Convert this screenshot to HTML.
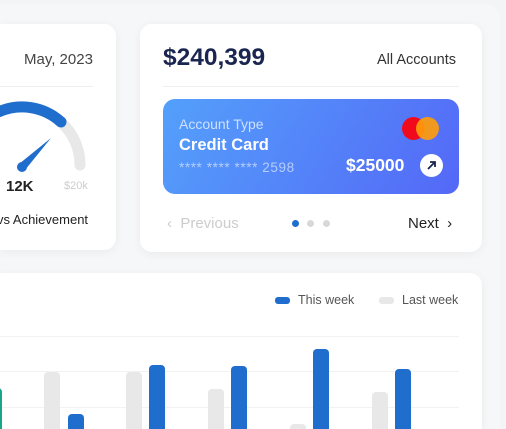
<!DOCTYPE html>
<html><head><style>
*{margin:0;padding:0;box-sizing:border-box}
html,body{width:506px;height:429px;overflow:hidden}
body{background:#f3f4f6;font-family:"Liberation Sans",sans-serif;position:relative}
.outer{position:absolute;left:0;top:4px;width:500px;height:425px;background:#f6f7f8;border-radius:0 14px 0 0}
.card{position:absolute;background:#fff;border-radius:12px;box-shadow:0 2px 10px rgba(0,0,0,.05)}
.t{position:absolute;white-space:nowrap}
</style></head><body>
<div class="outer"></div>
<div class="card" style="left:0;top:24px;width:116px;height:226px;border-radius:0 12px 12px 0"></div>
<div class="t" style="left:24px;top:51px;font-size:15px;color:#444">May, 2023</div>
<div style="position:absolute;left:0;top:86px;width:93px;height:1px;background:#eee"></div>
<svg style="position:absolute;left:0;top:0" width="120" height="250">
<path d="M-36 165 A58 58 0 0 1 80 165" fill="none" stroke="#e8e8e8" stroke-width="11" stroke-linecap="round"/>
<path d="M-36 165 A58 58 0 0 1 61 122" fill="none" stroke="#1f6dcc" stroke-width="11" stroke-linecap="round"/>
<path d="M19 164 L51 138 L25 170 Z" fill="#1f6dcc"/>
<circle cx="22" cy="167" r="5" fill="#1f6dcc"/>
</svg>
<div class="t" style="left:6px;top:178px;font-size:15px;font-weight:bold;color:#222">12K</div>
<div class="t" style="left:64px;top:180px;font-size:11px;color:#ccc">$20k</div>
<div class="t" style="left:-3px;top:212px;font-size:13px;color:#222">vs Achievement</div>

<div class="card" style="left:140px;top:24px;width:342px;height:228px"></div>
<div class="t" style="left:163px;top:44px;font-size:24.5px;font-weight:bold;color:#1a2550">$240,399</div>
<div class="t" style="left:377px;top:52px;font-size:14.5px;color:#333">All Accounts</div>
<div style="position:absolute;left:163px;top:86px;width:296px;height:1px;background:#f0f0f0"></div>
<div style="position:absolute;left:163px;top:99px;width:296px;height:95px;border-radius:12px;background:linear-gradient(120deg,#54a0fb,#5468f7)"></div>
<div class="t" style="left:179px;top:116px;font-size:14px;color:#cde0ff">Account Type</div>
<div class="t" style="left:179px;top:136px;font-size:16.5px;font-weight:bold;color:#fff">Credit Card</div>
<div class="t" style="left:179px;top:160px;font-size:13.5px;color:#b5cdfc;letter-spacing:.6px">**** **** **** 2598</div>
<div class="t" style="left:346px;top:155px;font-size:17.5px;font-weight:bold;color:#fff">$25000</div>
<div style="position:absolute;left:420px;top:154px;width:23px;height:23px;border-radius:50%;background:#fff"></div>
<svg style="position:absolute;left:420px;top:154px" width="23" height="23"><path d="M8 15 L15 8 M10 8 H15 V13" fill="none" stroke="#1a2550" stroke-width="1.8"/></svg>
<div style="position:absolute;left:402px;top:117px;width:23px;height:23px;border-radius:50%;background:#f00a1c"></div>
<div style="position:absolute;left:416px;top:117px;width:23px;height:23px;border-radius:50%;background:#ff9c0b;opacity:.92"></div>
<div class="t" style="left:167px;top:215px;font-size:15px;color:#ccc">‹&nbsp; Previous</div>
<div style="position:absolute;left:292px;top:220px;width:7px;height:7px;border-radius:50%;background:#1f6dcc"></div>
<div style="position:absolute;left:307px;top:220px;width:7px;height:7px;border-radius:50%;background:#d8d8d8"></div>
<div style="position:absolute;left:323px;top:220px;width:7px;height:7px;border-radius:50%;background:#d8d8d8"></div>
<div class="t" style="left:408px;top:215px;font-size:15px;color:#222">Next &nbsp;›</div>

<div class="card" style="left:0;top:273px;width:482px;height:156px;border-radius:0 12px 0 0"></div>
<div style="position:absolute;left:275px;top:297px;width:15px;height:7px;border-radius:3px;background:#1f6dcc"></div>
<div class="t" style="left:298px;top:293px;font-size:12.5px;color:#555">This week</div>
<div style="position:absolute;left:379px;top:297px;width:15px;height:7px;border-radius:3px;background:#e8e8e8"></div>
<div class="t" style="left:402px;top:293px;font-size:12.5px;color:#555">Last week</div>
<div style="position:absolute;left:0;top:336px;width:459px;height:1px;background:#f2f2f2"></div>
<div style="position:absolute;left:0;top:371px;width:459px;height:1px;background:#f2f2f2"></div>
<div style="position:absolute;left:0;top:407px;width:459px;height:1px;background:#f2f2f2"></div>
<svg style="position:absolute;left:0;top:340px" width="482" height="89">
<g fill="#e8e8e8"><rect x="44" y="32" width="16" height="80" rx="4"/><rect x="126" y="32" width="16" height="80" rx="4"/><rect x="208" y="49" width="16" height="80" rx="4"/><rect x="290" y="84" width="16" height="80" rx="4"/><rect x="372" y="52" width="16" height="80" rx="4"/></g>
<g fill="#1f6dcc"><rect x="68" y="74" width="16" height="80" rx="4"/><rect x="149" y="25" width="16" height="80" rx="4"/><rect x="231" y="26" width="16" height="80" rx="4"/><rect x="313" y="9" width="16" height="90" rx="4"/><rect x="395" y="29" width="16" height="80" rx="4"/></g>
<rect x="-10" y="48" width="12" height="80" rx="4" fill="#1aa58a"/>
</svg>
</body></html>
